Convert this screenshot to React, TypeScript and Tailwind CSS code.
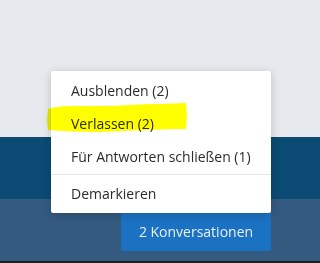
import React from "react";

const items = ["Ausblenden (2)", "Verlassen (2)", "Für Antworten schließen (1)"];

export default function App() {
  return (
    <div
      className="relative w-[320px] h-[263px] overflow-hidden"
      style={{ fontFamily: '"Open Sans", "Noto Sans", sans-serif' }}
    >
      <div className="flex flex-col h-full">
        <div className="h-[137px] bg-[#e6e9ed]" />
        <div className="h-[62px] bg-[#0b4a73]" />
        <div className="h-[62px] bg-[#345a80]">
          <div className="ml-[121px] mt-[13px] w-[150px] h-[39px] rounded-[2px] bg-[#1b72c2] flex items-center justify-center text-[14px] text-[#e9eff6]">
            2 Konversationen
          </div>
        </div>
        <div className="h-[2px] bg-[#1e1e1e]" />
      </div>

      <div className="absolute left-[51px] top-[71px] w-[220px] bg-white rounded-[2px] shadow-[0_2px_10px_rgba(0,0,0,0.18)] pt-[3px] pb-[2px] text-[14px] text-[#2b2b2b]">
        {items.map((t) => (
          <div key={t} className="h-[33px] flex items-center pl-[20px]">
            {t}
          </div>
        ))}
        <div className="h-px bg-[#e6e6e6] my-[1px]" />
        <div className="h-[35px] flex items-center pl-[20px]">Demarkieren</div>
      </div>

      <svg
        className="absolute left-0 top-0 mix-blend-multiply pointer-events-none"
        width="320"
        height="263"
      >
        <path
          d="M48,109 C58,105 80,106 100,106 C120,106 140,104 160,104 L186,103 L187,116 L186,129 C160,129 130,131 100,132 C80,132 60,131 48,130 L47,120 Z"
          fill="#ffff00"
        />
      </svg>
    </div>
  );
}
